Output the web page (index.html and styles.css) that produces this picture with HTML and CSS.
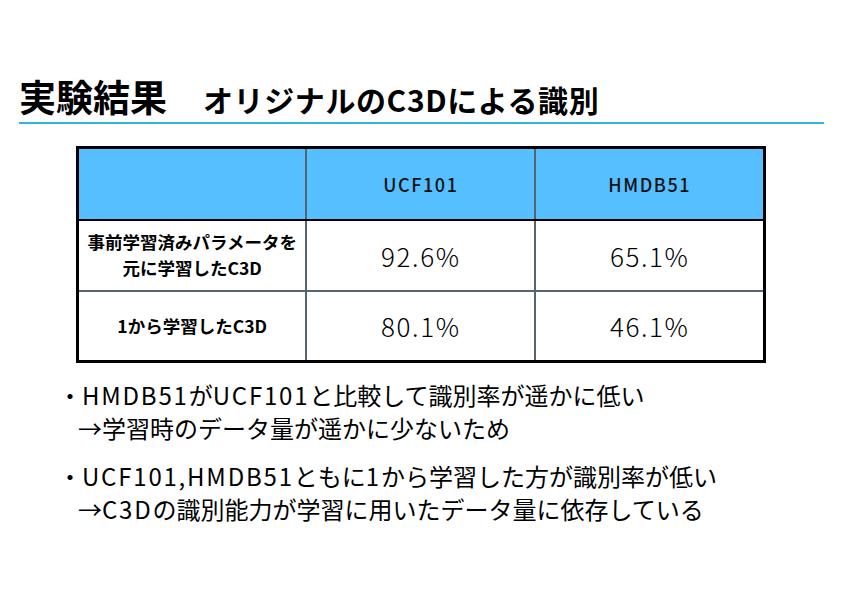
FILE: index.html
```html
<!DOCTYPE html>
<html lang="ja">
<head>
<meta charset="utf-8">
<link rel="stylesheet" href="styles.css">
</head>
<body>
<div class="slide">
  <header class="title-bar">
    <h1 class="title"><span class="title-main">実験結果</span><span class="title-sub">オリジナルのC3Dによる識別</span></h1>
  </header>
  <table class="results">
    <tr class="head">
      <th></th>
      <th>UCF101</th>
      <th>HMDB51</th>
    </tr>
    <tr>
      <td class="label">事前学習済みパラメータを<br>元に学習したC3D</td>
      <td class="num">92.6%</td>
      <td class="num">65.1%</td>
    </tr>
    <tr>
      <td class="label">1から学習したC3D</td>
      <td class="num">80.1%</td>
      <td class="num">46.1%</td>
    </tr>
  </table>
  <ul class="notes">
    <li>
      <div class="point">・<span class="lat">HMDB51</span>が<span class="lat">UCF101</span>と比較して識別率が遥かに低い</div>
      <div class="reason">→学習時のデータ量が遥かに少ないため</div>
    </li>
    <li>
      <div class="point">・<span class="lat">UCF101,HMDB51</span>ともに<span class="lat">1</span>から学習した方が識別率が低い</div>
      <div class="reason">→<span class="lat">C3D</span>の識別能力が学習に用いたデータ量に依存している</div>
    </li>
  </ul>
</div>
</body>
</html>
```
FILE: styles.css
```css
* { box-sizing: border-box; }
html, body { margin: 0; padding: 0; background: #fff; }
body {
  font-family: "Noto Sans CJK JP", "Noto Sans", sans-serif;
  color: #000;
}
.slide {
  width: 842px;
  height: 595px;
  padding-top: 75px;
  overflow: hidden;
}
.title-bar {
  margin: 0 18px 0 19px;
  border-bottom: 2px solid #2bb5df;
  padding-bottom: 2px;
}
.title {
  margin: 0;
  font-weight: 700;
  line-height: 42px;
  display: flex;
  align-items: baseline;
}
.title-main {
  font-size: 37px;
}
.title-sub {
  font-size: 30px;
  letter-spacing: 0.6px;
  margin-left: 36px;
}
.results {
  margin: 22px 0 0 76px;
  width: 690px;
  border-collapse: collapse;
  border: 3px solid #000;
}
.results th, .results td {
  width: 230px;
  height: 71px;
  text-align: center;
  vertical-align: middle;
  border-left: 2px solid #56646f;
  border-top: 2px solid #56646f;
  padding: 0;
}
.results tr.head th {
  height: 72px;
  background: #56bfff;
  color: #111;
  font-weight: 500;
  font-size: 18px;
  letter-spacing: 1.6px;
  border-top: none;
  border-bottom: 2px solid #000;
}
.results th:first-child, .results td:first-child { border-left: none; }
.results td.label {
  font-size: 17.5px;
  font-weight: 700;
  line-height: 26px;
}
.results td.num {
  font-size: 26px;
  font-weight: 300;
  letter-spacing: 1.6px;
}
.notes {
  list-style: none;
  margin: 15px 0 0 58px;
  padding: 0;
  font-size: 24px;
  line-height: 33px;
}
.notes li { margin-bottom: 15px; }
.lat { letter-spacing: 1.8px; }
.reason { padding-left: 20px; }
```
